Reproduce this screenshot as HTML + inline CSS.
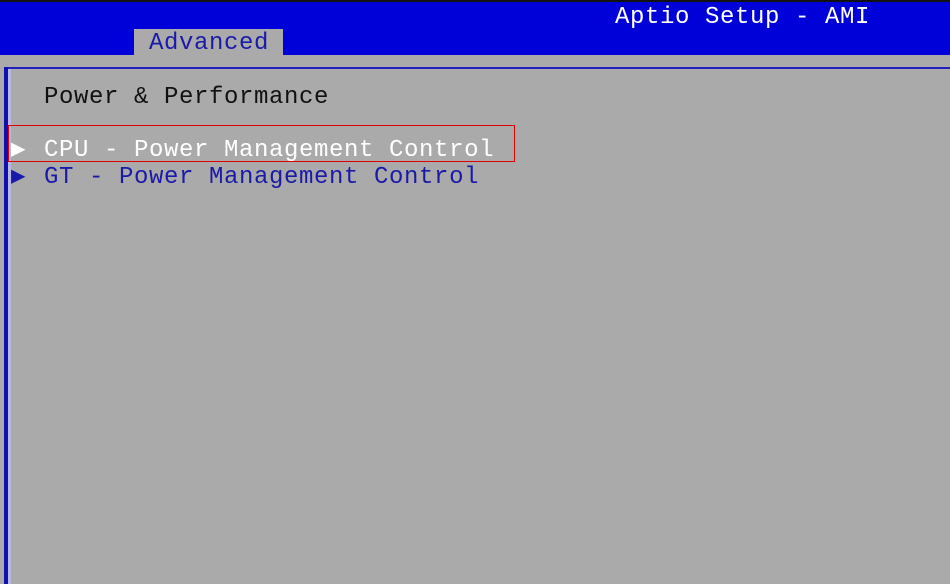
<!DOCTYPE html><html><head><style>
body{margin:0;width:950px;height:584px;background:#aaa;position:relative;overflow:hidden;font-family:"Liberation Mono",monospace;font-size:24px;letter-spacing:0.6px}
.t{position:absolute;white-space:pre;line-height:1}
</style></head><body>
<div style="position:absolute;left:0;top:0;width:950px;height:2px;background:#111"></div>
<div style="position:absolute;left:0;top:2px;width:950px;height:53px;background:#0000d8"></div>
<div style="position:absolute;left:134px;top:29px;width:149px;height:26px;background:#aaa"></div>
<div class="t" style="left:149px;top:32px;color:#1a1aa8">Advanced</div>
<div class="t" style="left:615px;top:6px;color:#fff">Aptio Setup - AMI</div>
<div style="position:absolute;left:4px;top:67px;width:946px;height:2px;background:#2020c0"></div>
<div style="position:absolute;left:4px;top:67px;width:4px;height:517px;background:#1010b0"></div>
<div style="position:absolute;left:8px;top:69px;width:3px;height:515px;background:#b8b8e0"></div>
<div class="t" style="left:44px;top:86px;color:#111">Power &amp; Performance</div>
<div style="position:absolute;left:8px;top:125px;width:507px;height:37px;border:1px solid #e00000;box-sizing:border-box"></div>
<div class="t" style="left:11px;top:139px;color:#fff">&#9654;</div>
<div class="t" style="left:44px;top:139px;color:#fff">CPU - Power Management Control</div>
<div class="t" style="left:11px;top:166px;color:#1a1aa8">&#9654;</div>
<div class="t" style="left:44px;top:166px;color:#1a1aa8">GT - Power Management Control</div>
</body></html>
